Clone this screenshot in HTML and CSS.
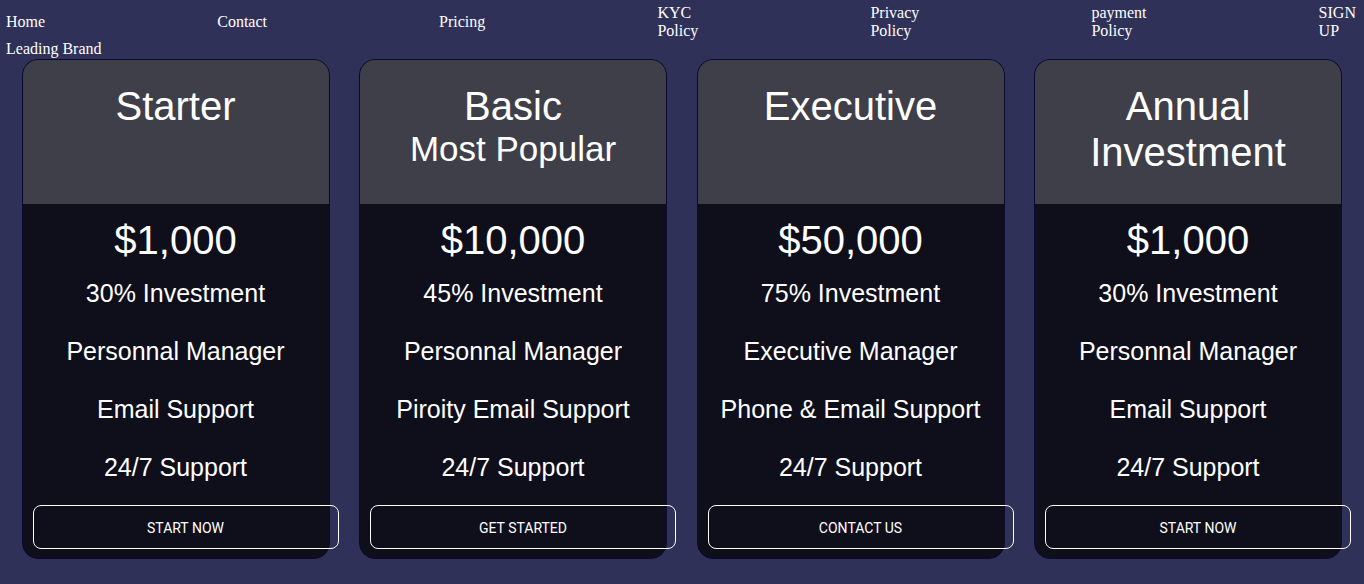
FILE: index.html
```html
<!DOCTYPE html>
<html lang="en">
<head>
<meta charset="utf-8">
<title>Pricing</title>
<link rel="stylesheet" href="styles.css">
</head>
<body>
<header class="top">
  <ul class="nav">
    <li>Home</li>
    <li>Contact</li>
    <li>Pricing</li>
    <li>KYC Policy</li>
    <li>Privacy Policy</li>
    <li>payment Policy</li>
    <li>SIGN UP</li>
  </ul>
  <div class="brand">Leading Brand</div>
</header>
<main class="plans">
  <section class="card">
    <div class="card-head"><h2 class="title">Starter</h2></div>
    <div class="card-body">
      <div class="price">$1,000</div>
      <p class="feature">30% Investment</p>
      <p class="feature">Personnal Manager</p>
      <p class="feature">Email Support</p>
      <p class="feature">24/7 Support</p>
      <button class="cta">START NOW</button>
    </div>
  </section>
  <section class="card">
    <div class="card-head"><h2 class="title">Basic</h2><div class="subtitle">Most Popular</div></div>
    <div class="card-body">
      <div class="price">$10,000</div>
      <p class="feature">45% Investment</p>
      <p class="feature">Personnal Manager</p>
      <p class="feature">Piroity Email Support</p>
      <p class="feature">24/7 Support</p>
      <button class="cta">GET STARTED</button>
    </div>
  </section>
  <section class="card">
    <div class="card-head"><h2 class="title">Executive</h2></div>
    <div class="card-body">
      <div class="price">$50,000</div>
      <p class="feature">75% Investment</p>
      <p class="feature">Executive Manager</p>
      <p class="feature">Phone &amp; Email Support</p>
      <p class="feature">24/7 Support</p>
      <button class="cta">CONTACT US</button>
    </div>
  </section>
  <section class="card">
    <div class="card-head"><h2 class="title">Annual<br>Investment</h2></div>
    <div class="card-body">
      <div class="price">$1,000</div>
      <p class="feature">30% Investment</p>
      <p class="feature">Personnal Manager</p>
      <p class="feature">Email Support</p>
      <p class="feature">24/7 Support</p>
      <button class="cta">START NOW</button>
    </div>
  </section>
</main>
</body>
</html>
```
FILE: styles.css
```css
html, body {
  margin: 0;
  padding: 0;
  background: #2f3159;
}
body {
  font-family: "Liberation Serif", "Times New Roman", serif;
  color: #fff;
  padding-top: 4px;
  height: 580px;
  overflow: hidden;
}
.top {
  padding: 0 8px 0 6px;
}
.nav {
  list-style: none;
  margin: 0;
  padding: 0;
  display: flex;
  justify-content: space-between;
  align-items: center;
  font-size: 16px;
  line-height: 18px;
}
.nav li {
  width: min-content;
}
.brand {
  font-size: 16px;
  line-height: 18px;
}
.plans {
  display: flex;
  gap: 29.5px;
  padding-left: 21.5px;
  margin-top: 1px;
}
.card {
  width: 308px;
  flex: none;
  box-sizing: border-box;
  border: 1px solid #0a0a30;
  border-radius: 16px;
  background: #0f0f1b;
  font-family: "Liberation Sans", Arial, sans-serif;
  text-align: center;
}
.card-head {
  height: 144px;
  box-sizing: border-box;
  padding-top: 23px;
  background: #3f3f4a;
  border-radius: 15px 15px 0 0;
}
.title {
  margin: 0;
  font-size: 40px;
  line-height: 46px;
  font-weight: normal;
}
.subtitle {
  font-size: 35px;
  line-height: 40px;
}
.card-body {
  padding: 13px 0 9px;
}
.price {
  font-size: 40px;
  line-height: 46px;
  margin-bottom: 1px;
}
.feature {
  margin: 0;
  font-size: 25px;
  line-height: 58px;
}
.cta {
  display: block;
  margin: 9px 0 0 10px;
  padding: 1px 0 0;
  width: 306px;
  height: 44px;
  box-sizing: border-box;
  border: 1px solid #fff;
  border-radius: 8px;
  background: transparent;
  color: #fff;
  font-family: Roboto, "Liberation Sans", sans-serif;
  font-size: 14px;
  cursor: pointer;
}
```
